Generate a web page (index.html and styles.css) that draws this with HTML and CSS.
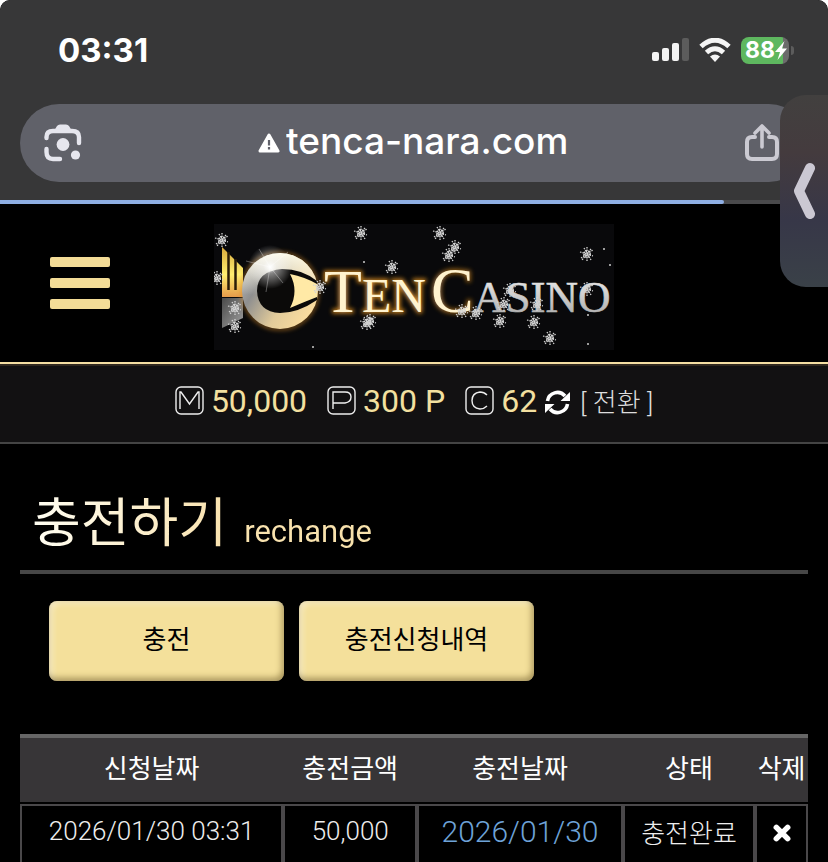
FILE: index.html
```html
<!DOCTYPE html>
<html lang="ko">
<head>
  <meta charset="UTF-8">
  <meta name="viewport" content="width=device-width, initial-scale=1.0">
  <title>TEN CASINO - 충전하기</title>
  <link rel="stylesheet" href="styles.css">
</head>
<body>
  <div class="browser">
    <div class="status">
      <span class="time">03:31</span>
      <div class="status-icons">
        <svg width="37" height="24" viewBox="0 0 37 24">
          <g fill="#f5f5f5">
            <rect x="0" y="14" width="7" height="9" rx="2"/>
            <rect x="10" y="10" width="7" height="13" rx="2"/>
            <rect x="20" y="5" width="7" height="18" rx="2"/>
          </g>
          <rect x="30" y="0" width="7" height="23" rx="2" fill="#5c5c5c"/>
        </svg>
        <svg width="32" height="24" viewBox="0 0 32 24">
          <g fill="none" stroke="#f5f5f5" stroke-width="5">
            <path d="M2 8.5Q16 -4 30 8.5"/>
            <path d="M7.5 14.5Q16 7 24.500 14.500"/>
          </g>
          <path d="M16 24L11 18.500Q16 14.500 21 18.500Z" fill="#f5f5f5"/>
        </svg>
        <div class="battery">
          <span>88</span>
          <svg width="12" height="19" viewBox="0 0 12 19"><path d="M9.500 0L0 11H5L2.500 19L12 7.500H7Z" fill="#fff"/></svg>
        </div>
      </div>
    </div>
    <div class="address">
      <button class="icon-btn" aria-label="렌즈">
        <svg width="38" height="38" viewBox="0 0 38 38">
          <g fill="none" stroke="#e6e6ee" stroke-width="4.400" stroke-linecap="round">
            <path d="M2.500 14V13Q2.500 7 9 7H28Q35 7 35 13V19"/>
            <path d="M2.500 25V28Q2.500 35 9 35H16"/>
          </g>
          <path d="M10 7L13 2Q14 0.500 16 0.500H22Q24 0.500 25 2L28 7Z" fill="#e6e6ee"/>
          <circle cx="19" cy="20.500" r="6.400" fill="#e6e6ee"/>
          <circle cx="31.500" cy="31" r="4.600" fill="#e6e6ee"/>
        </svg>
      </button>
      <label class="site">
        <svg width="22" height="20" viewBox="0 0 22 20">
          <path d="M11 2L20 18H2Z" fill="#fff" stroke="#fff" stroke-width="3" stroke-linejoin="round"/>
          <path d="M11 7V12.500M11 14V16.500" stroke="#60616a" stroke-width="2.200"/>
        </svg>
        <input type="text" value="tenca-nara.com" aria-label="주소">
      </label>
      <button class="icon-btn" aria-label="공유">
        <svg width="36" height="38" viewBox="0 0 36 38" fill="none" stroke="#cbcad2" stroke-width="4" stroke-linecap="round" stroke-linejoin="round">
          <path d="M11 13H8Q3 13 3 18V30Q3 35 8 35H28Q33 35 33 30V18Q33 13 28 13H25"/>
          <path d="M18 23V3M11 9L18 2L25 9" stroke-width="3.600"/>
        </svg>
      </button>
    </div>
    <div class="loading"><div class="loading-bar"></div></div>
    <button class="side-tab" aria-label="열기">
      <svg width="22" height="58" viewBox="0 0 22 58"><path d="M17 6L6 29L17 52" fill="none" stroke="#cbc8d3" stroke-width="10" stroke-linecap="round" stroke-linejoin="round"/></svg>
    </button>
  </div>

  <header class="top">
    <button class="menu" aria-label="메뉴"><i></i><i></i><i></i></button>
    <a href="#" class="logo">
      <svg width="400" height="126" viewBox="0 0 400 126">
        <defs>
          <linearGradient id="ring" x1="0" y1="0.200" x2="1" y2="0.800">
            <stop offset="0" stop-color="#b9b9b9"/>
            <stop offset="0.250" stop-color="#8f8f8f"/>
            <stop offset="0.600" stop-color="#e2cb9a"/>
            <stop offset="1" stop-color="#ffe0a0"/>
          </linearGradient>
          <linearGradient id="ringTop" x1="0" y1="0" x2="0" y2="1">
            <stop offset="0" stop-color="#fffbe8"/>
            <stop offset="0.550" stop-color="#fffbe8" stop-opacity="0"/>
          </linearGradient>
          <linearGradient id="wing" x1="0" y1="0" x2="0" y2="1">
            <stop offset="0" stop-color="#d9a93c"/>
            <stop offset="0.550" stop-color="#ffee70"/>
            <stop offset="1" stop-color="#e59a4a"/>
          </linearGradient>
          <linearGradient id="steel" x1="0" y1="0" x2="1" y2="1">
            <stop offset="0" stop-color="#4a4a4a"/>
            <stop offset="1" stop-color="#a0a0a0"/>
          </linearGradient>
          <linearGradient id="silver" x1="0" y1="0" x2="0" y2="1">
            <stop offset="0" stop-color="#f2f2f2"/>
            <stop offset="1" stop-color="#a5a5a5"/>
          </linearGradient>
          <radialGradient id="flare">
            <stop offset="0" stop-color="#fff"/>
            <stop offset="0.300" stop-color="#fff" stop-opacity="0.500"/>
            <stop offset="1" stop-color="#fff" stop-opacity="0"/>
          </radialGradient>
          <filter id="glow" x="-20%" y="-20%" width="140%" height="140%">
            <feGaussianBlur stdDeviation="2"/>
          </filter>
          <g id="flake" fill="none" stroke="#d4d4d4">
            <path d="M0-7V7M-7-2L6 2M-6 4L6-4M-3-6L4 6M4-5L-5 6" stroke-width="1.300" stroke-dasharray="1.500 1"/>
            <circle r="3" stroke-width="2" stroke-dasharray="1.500 1"/>
          </g>
        </defs>
        <rect width="400" height="126" fill="#09090b"/>

        <path d="M8 23L29 44V73H8Z" fill="url(#wing)"/>
        <path d="M14.500 28V66M21.500 35V66" stroke="#2a1c08" stroke-width="2.500"/>
        <path d="M8 74H29V94L8 104Z" fill="url(#steel)"/>

        <circle cx="66" cy="67" r="38" fill="none" stroke="#d78b28" stroke-width="3" opacity="0.600" filter="url(#glow)"/>
        <circle cx="66" cy="67" r="38" fill="url(#ring)"/>
        <circle cx="66" cy="67" r="38" fill="url(#ringTop)"/>
        <path d="M103 57Q88 45 68 45Q43 47 43 67Q44 88 66 89Q84 89 103 76Z" fill="#0b0a09"/>
        <path d="M76 50Q91 53 103 60V73Q90 78 76 84Q85 67 76 50Z" fill="#ffe9a6"/>
        <circle cx="56" cy="43" r="22" fill="url(#flare)"/>
        <path d="M56 43L45 25M56 43L74 28M56 43L32 37M56 43L52 68M56 43L69 59" stroke="#fff" stroke-width="0.800" opacity="0.400"/>

        <g class="logo-text" fill="#e7941f" stroke="#e7941f" stroke-width="3" opacity="0.800" filter="url(#glow)" aria-hidden="true">
          <use href="#word-ten"/>
          <use href="#word-c" opacity="0.700"/>
        </g>
        <g class="logo-text">
          <text id="word-ten" y="88"><tspan x="110" font-size="62">T</tspan><tspan x="148" font-size="48">EN</tspan></text>
          <text id="word-c" x="217" y="88" font-size="64">C</text>
          <text x="259" y="88" font-size="45" fill="url(#silver)" stroke="url(#silver)" stroke-width="0.600">ASINO</text>
        </g>

        <use href="#flake" x="8" y="16"/>
        <use href="#flake" x="3" y="54"/>
        <use href="#flake" x="21" y="84"/>
        <use href="#flake" x="21" y="102"/>
        <use href="#flake" x="147" y="9"/>
        <use href="#flake" x="178" y="43"/>
        <use href="#flake" x="106" y="63"/>
        <use href="#flake" x="156" y="97"/>
        <use href="#flake" x="153" y="99"/>
        <use href="#flake" x="226" y="9"/>
        <use href="#flake" x="241" y="23"/>
        <use href="#flake" x="235" y="31"/>
        <use href="#flake" x="373" y="30"/>
        <use href="#flake" x="248" y="87"/>
        <use href="#flake" x="262" y="89"/>
        <use href="#flake" x="290" y="80"/>
        <use href="#flake" x="296" y="66"/>
        <use href="#flake" x="286" y="97"/>
        <use href="#flake" x="323" y="80"/>
        <use href="#flake" x="320" y="98"/>
        <use href="#flake" x="336" y="114"/>
        <use href="#flake" x="373" y="65"/>
        <g fill="#ccc">
          <circle cx="390" cy="25" r="1"/><circle cx="396" cy="41" r="1"/><circle cx="374" cy="91" r="1"/>
          <circle cx="374" cy="120" r="1"/><circle cx="99" cy="123" r="1"/><circle cx="150" cy="38" r="1"/>
        </g>
      </svg>
    </a>
  </header>

  <div class="money">
    <svg class="badge" viewBox="0 0 29 29"><rect x="1" y="1" width="27" height="27" rx="5"/><path d="M5 23V6H6L14.500 18L23 6H24V23"/></svg>
    <span class="amount">50,000</span>
    <svg class="badge" viewBox="0 0 29 29"><rect x="1" y="1" width="27" height="27" rx="5"/><path d="M6 23V6H18Q24 6 24 11T18 17H6"/></svg>
    <span class="amount">300 P</span>
    <svg class="badge" viewBox="0 0 29 29"><rect x="1" y="1" width="27" height="27" rx="5"/><path d="M22 9Q19 6 15 6Q7 7 7 14.500T15 23Q19 23 22 20"/></svg>
    <span class="amount last">62</span>
    <svg class="refresh" width="25" height="25" viewBox="0 0 25 25">
      <path d="M2.500 11A10 10 0 0 1 20 6M22.500 14A10 10 0 0 1 5 19" fill="none" stroke="#fff" stroke-width="3.600"/>
      <path d="M25 2V11H15.500ZM0 23V14H9.500Z" fill="#fff"/>
    </svg>
    <a href="#" class="change">[ 전환 ]</a>
  </div>

  <main>
    <h1>충전하기 <small>rechange</small></h1>
    <div class="tabs">
      <button>충전</button>
      <button>충전신청내역</button>
    </div>
    <table>
      <colgroup>
        <col class="c-apply"><col class="c-amount"><col class="c-date"><col class="c-state"><col class="c-del">
      </colgroup>
      <thead>
        <tr><th>신청날짜</th><th>충전금액</th><th>충전날짜</th><th>상태</th><th>삭제</th></tr>
      </thead>
      <tbody>
        <tr>
          <td>2026/01/30 03:31</td>
          <td>50,000</td>
          <td><a href="#" class="date">2026/01/30</a></td>
          <td>충전완료</td>
          <td>
            <button class="del" aria-label="삭제">
              <svg width="18" height="18" viewBox="0 0 16 16"><path d="M3 3L13 13M13 3L3 13" stroke="#fff" stroke-width="5" stroke-linecap="round"/></svg>
            </button>
          </td>
        </tr>
      </tbody>
    </table>
  </main>
</body>
</html>
```
FILE: styles.css
```css
* {
  box-sizing: border-box;
}

html {
  background: #fff;
}

body {
  margin: 0;
  min-height: 100vh;
  background: #000;
  border-radius: 10px 10px 0 0;
  color: #fff;
  font-family: Roboto, "Noto Sans CJK KR", sans-serif;
  font-size: 26px;
}

button {
  border: 0;
  padding: 0;
  background: none;
  font: inherit;
  cursor: pointer;
}

svg {
  display: block;
}

/* browser bar */
.browser {
  position: relative;
  background: #373738;
  border-radius: 10px 10px 0 0;
}

.status {
  display: flex;
  justify-content: space-between;
  align-items: center;
  height: 104px;
  padding: 0 34px 4px 58px;
}

.time {
  font: 700 33px/40px Inter, sans-serif;
}

.status-icons {
  display: flex;
  align-items: center;
  gap: 10px;
}

.battery {
  position: relative;
  display: flex;
  align-items: center;
  width: 48px;
  height: 27px;
  padding-left: 4px;
  margin-right: 5px;
  border-radius: 8px;
  background: linear-gradient(90deg, #5eb75f 88%, #6b6b6b 88%);
  font: 700 23px/27px Inter, sans-serif;
}

.battery::after {
  content: "";
  position: absolute;
  right: -5px;
  top: 9px;
  width: 3px;
  height: 9px;
  border-radius: 0 3px 3px 0;
  background: #5c5c5c;
}

.address {
  display: flex;
  justify-content: space-between;
  align-items: center;
  height: 78px;
  margin: 0 20px;
  padding: 0 28px 0 24px;
  border-radius: 39px;
  background: #606169;
}

.site {
  display: flex;
  align-items: center;
  gap: 6px;
}

.site input {
  width: 282px;
  padding: 0 0 4px;
  border: 0;
  outline: 0;
  background: none;
  color: #fff;
  font: 500 37px/48px Inter, sans-serif;
}

.loading {
  height: 4px;
  margin-top: 18px;
  background: #4a4a4c;
}

.loading-bar {
  width: 87.4%;
  height: 4px;
  border-radius: 0 2px 2px 0;
  background: #8fafe4;
}

.side-tab {
  position: absolute;
  right: 0;
  top: 95px;
  display: flex;
  align-items: center;
  width: 48px;
  height: 192px;
  padding-left: 13px;
  border-radius: 26px 0 0 26px;
  background: linear-gradient(#42403f, #443b3e 30%, #373748 65%, #3a4148);
}

/* site header */
.top {
  display: grid;
  grid-template-columns: 1fr 400px 1fr;
  align-items: center;
  padding: 20px 0 12px;
}

.menu {
  display: flex;
  flex-direction: column;
  gap: 11px;
  width: 60px;
  margin: 0 0 8px 50px;
}

.menu i {
  width: 100%;
  height: 10px;
  border-radius: 2px;
  background: #f3dc97;
}

.logo-text {
  font-family: "Liberation Serif", serif;
  fill: #fff3cf;
}

.money {
  display: flex;
  justify-content: center;
  align-items: center;
  height: 82px;
  padding-bottom: 6px;
  border-top: 2px solid #f5dfa3;
  border-bottom: 2px solid #444;
  background: #121112;
  box-shadow: inset 0 2px #30281f;
}

.badge {
  width: 29px;
  height: 29px;
  margin-right: 7px;
  fill: none;
  stroke: #eee;
  stroke-width: 1.4;
}

.amount {
  margin-right: 20px;
  padding-top: 2px;
  color: #f3e0a0;
  font-size: 32px;
  line-height: 40px;
}

.amount.last {
  margin-right: 8px;
}

.refresh {
  margin: 4px 10px 0 0;
}

.change {
  color: #ddd;
  font-weight: 300;
  text-decoration: none;
}

/* content */
main {
  padding: 40px 20px 0;
}

h1 {
  margin: 0;
  padding: 0 12px 6px;
  border-bottom: 4px solid #474747;
  color: #f9e7b8;
  font-weight: 400;
  font-size: 53px;
  line-height: 80px;
  background: linear-gradient(90deg, #fffdf0 20px, #f9e3b0 200px, #f3dc9f) padding-box text;
  -webkit-text-fill-color: transparent;
}

h1 small {
  margin-left: 4px;
  font-size: 31px;
  line-height: 32px;
}

.tabs {
  display: flex;
  gap: 15px;
  margin: 27px 29px 53px;
}

.tabs button {
  width: 235px;
  height: 80px;
  padding-bottom: 8px;
  border-radius: 8px;
  background: #f4e09b;
  box-shadow: inset -2px -3px 6px rgba(90, 70, 20, 0.5), inset 3px 2px 6px rgba(255, 255, 255, 0.5);
  color: #000;
}

table {
  width: 100%;
  table-layout: fixed;
  border-collapse: separate;
  border-spacing: 0;
  text-align: center;
}

.c-apply { width: 33.4%; }
.c-amount { width: 17%; }
.c-date { width: 26.1%; }
.c-state { width: 16.8%; }
.c-del { width: 6.7%; }

th {
  height: 70px;
  padding: 0 0 8px;
  border-top: 4px solid #666;
  border-bottom: 2px solid #000;
  background: #373537;
  font-weight: 400;
  white-space: nowrap;
}

td {
  height: 58px;
  padding: 0 0 6px;
  border: 2px solid #4a484a;
  border-bottom: 0;
  color: #eee;
  font-weight: 300;
  white-space: nowrap;
}

.date {
  color: #6ea3d8;
  font-size: 30px;
  text-decoration: none;
}

.del {
  display: block;
  margin: 4px auto 0;
}
```
